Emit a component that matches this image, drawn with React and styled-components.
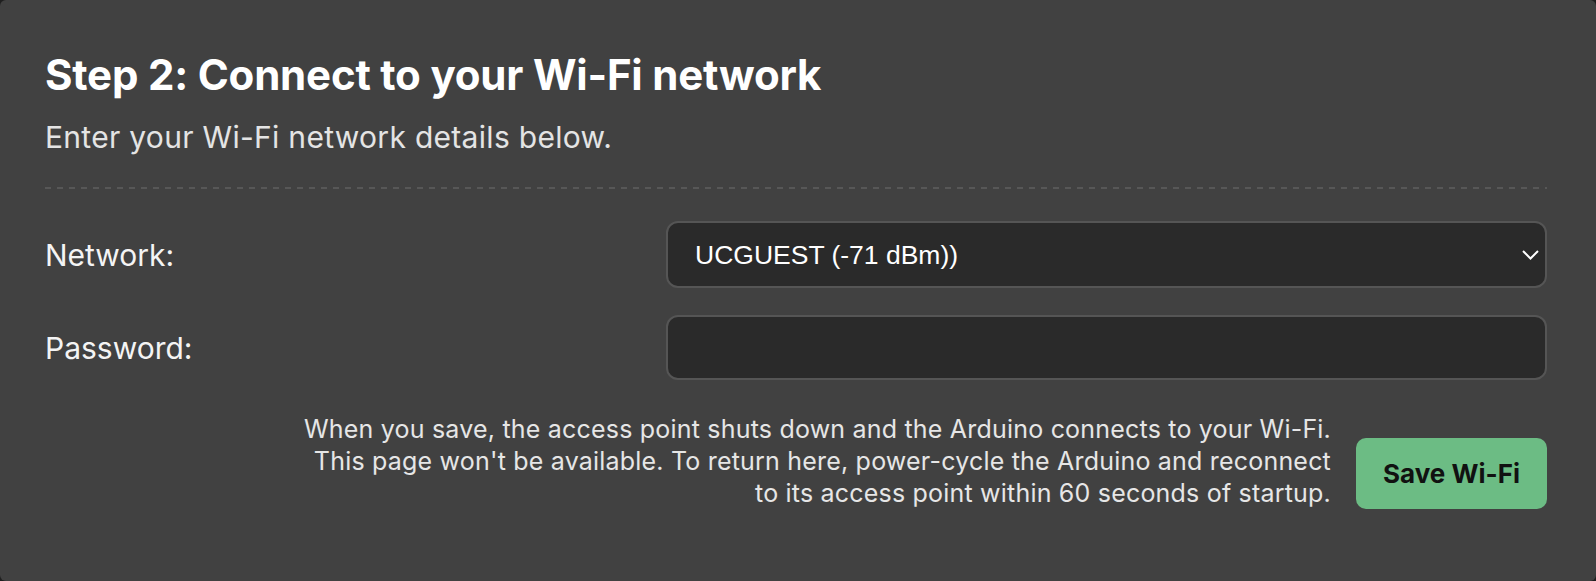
import React from "react";
import styled, { createGlobalStyle } from "styled-components";

const GlobalStyle = createGlobalStyle`
  html, body {
    margin: 0;
    background: #1f1f1f;
  }
  body {
    font-family: Inter, "Noto Sans", "Liberation Sans", sans-serif;
  }
`;

const Card = styled.div`
  box-sizing: border-box;
  min-height: 581px;
  background: #414141;
  border-radius: 6px;
  padding: 50px 49px 71px 45px;
  color: #fff;
`;

const Title = styled.h2`
  margin: 0;
  font-size: 42px;
  line-height: 50px;
  font-weight: 700;
  letter-spacing: -0.2px;
  color: #fff;
`;

const Sub = styled.p`
  margin: 19px 0 0;
  font-size: 30px;
  line-height: 36px;
  letter-spacing: 0.3px;
  color: #e4e4e4;
`;

const Divider = styled.div`
  margin-top: 32px;
  height: 2px;
  background: repeating-linear-gradient(
    to right,
    #575757 0 6px,
    transparent 6px 12px
  );
`;

const Form = styled.form`
  display: grid;
  grid-template-columns: 621px 1fr;
  align-items: center;
  row-gap: 27px;
  margin-top: 32px;
`;

const Label = styled.label`
  font-size: 30px;
  color: #f4f4f4;
`;

const SelectWrap = styled.div`
  position: relative;
`;

const Select = styled.select`
  appearance: none;
  width: 100%;
  height: 67px;
  box-sizing: border-box;
  background: #2a2a2a;
  border: 2px solid #555;
  border-radius: 12px;
  padding: 0 40px 0 27px;
  color: #fff;
  font-family: "Liberation Sans", Arial, sans-serif;
  font-size: 26.5px;
  outline: none;
`;

const Chevron = styled.svg`
  position: absolute;
  right: 8px;
  top: 50%;
  transform: translateY(-50%);
  pointer-events: none;
`;

const Input = styled.input`
  width: 100%;
  height: 65px;
  box-sizing: border-box;
  background: #2a2a2a;
  border: 2px solid #555;
  border-radius: 12px;
  padding: 0 27px;
  color: #fff;
  font-size: 26px;
  outline: none;
`;

const Footer = styled.div`
  display: flex;
  justify-content: flex-end;
  align-items: flex-end;
  gap: 25px;
  margin-top: 33px;
`;

const Note = styled.p`
  margin: 0;
  text-align: right;
  font-size: 25px;
  line-height: 32px;
  letter-spacing: 0.2px;
  color: #e6e6e6;
`;

const SaveButton = styled.button`
  flex: none;
  width: 191px;
  height: 71px;
  border: none;
  border-radius: 10px;
  background: #6cbc84;
  color: #111;
  font-family: Inter, "Liberation Sans", sans-serif;
  font-size: 26px;
  font-weight: 700;
  cursor: pointer;
`;

function App() {
  return (
    <>
      <GlobalStyle />
      <Card>
        <Title>Step 2: Connect to your Wi-Fi network</Title>
        <Sub>Enter your Wi-Fi network details below.</Sub>
        <Divider />
        <Form onSubmit={(e) => e.preventDefault()}>
          <Label htmlFor="ssid">Network:</Label>
          <SelectWrap>
            <Select id="ssid" defaultValue="UCGUEST">
              <option value="UCGUEST">UCGUEST (-71 dBm))</option>
            </Select>
            <Chevron width="17" height="10" viewBox="0 0 17 10">
              <polyline
                points="1,1 8.5,8.5 16,1"
                fill="none"
                stroke="#fff"
                strokeWidth="2"
              />
            </Chevron>
          </SelectWrap>
          <Label htmlFor="pass">Password:</Label>
          <Input id="pass" type="password" />
        </Form>
        <Footer>
          <Note>
            When you save, the access point shuts down and the Arduino connects to your Wi-Fi.
            <br />
            This page won't be available. To return here, power-cycle the Arduino and reconnect
            <br />
            to its access point within 60 seconds of startup.
          </Note>
          <SaveButton type="button">Save Wi-Fi</SaveButton>
        </Footer>
      </Card>
    </>
  );
}

export default App;
